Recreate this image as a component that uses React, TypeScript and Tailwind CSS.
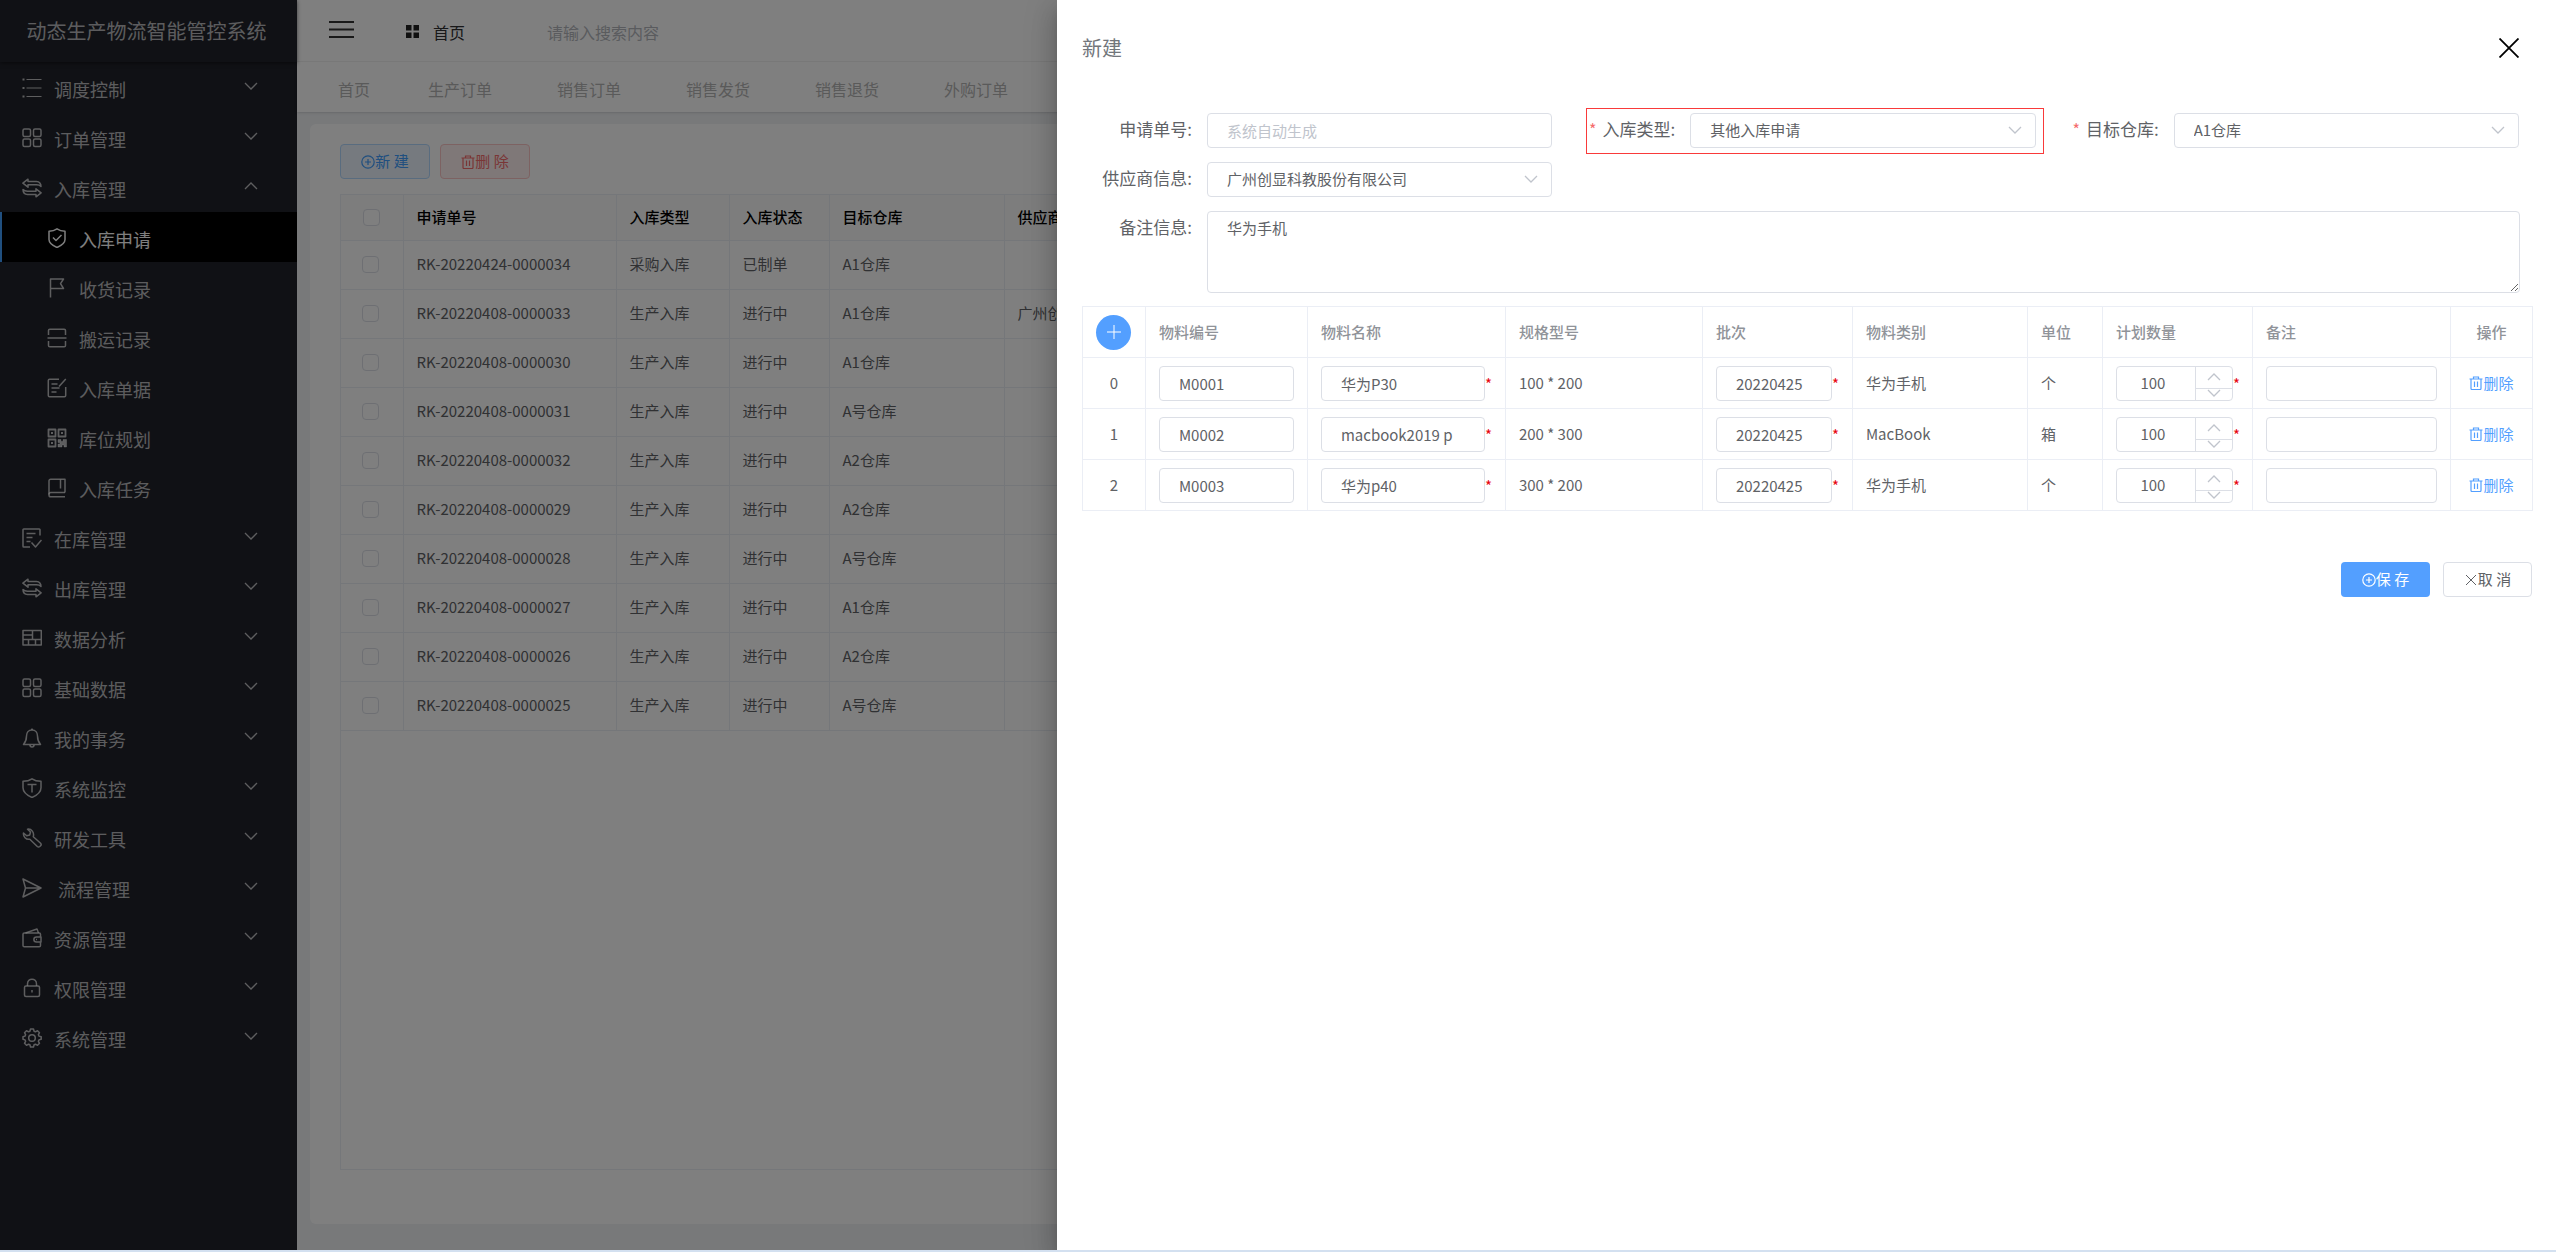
// Inbound request page with the "new request" drawer open on top of it.

import { useState } from "react";
import type { ReactNode } from "react";

type IconName =
  | "list"
  | "grid"
  | "swap"
  | "shield"
  | "flag"
  | "scan"
  | "edit"
  | "qrcode"
  | "book"
  | "todo"
  | "table"
  | "bell"
  | "monitor"
  | "wrench"
  | "send"
  | "wallet"
  | "lock"
  | "gear";

const ICONS: Record<IconName, ReactNode> = {
  list: (
    <>
      <path d="M4.500 1.500h15M4.500 10h15M4.500 18.500h15" strokeWidth="1.200" />
      <path d="M0.500 1.500h2M0.500 10h2M0.500 18.500h2" strokeWidth="2" />
    </>
  ),
  grid: (
    <>
      <rect x="1" y="1" width="7.500" height="7.500" rx="1.500" />
      <rect x="11.500" y="1" width="7.500" height="7.500" rx="1.500" />
      <rect x="1" y="11" width="7.500" height="7.500" rx="1.500" />
      <rect x="11.500" y="11" width="7.500" height="7.500" rx="1.500" />
    </>
  ),
  swap: (
    <>
      <path d="M6 1.200.9 5.200 6 9.200V6.800h8.500c2 0 3.500.5 4.500 1.700 0-3-1.500-4.900-4.500-4.900H6z" />
      <path d="M14 18.800l5.100-4-5.100-4v2.400H5.500c-2 0-3.500-.5-4.500-1.700 0 3 1.500 4.900 4.500 4.900H14z" />
    </>
  ),
  shield: (
    <>
      <path d="M10 .8c2.500 1.700 5 2.300 8 2.400v8.300c0 3.500-3.500 6-8 8-4.500-2-8-4.500-8-8V3.200C5 3.100 7.500 2.500 10 .8z" />
      <path d="m6 9.500 3 3 5.500-5.500" />
    </>
  ),
  flag: <path d="M3.500 19.500V1h13l-3 4.700 3 4.800h-13" />,
  scan: (
    <>
      <path d="M1.500 7V2.500c0-.8.5-1.300 1.300-1.300h14.400c.8 0 1.300.5 1.300 1.300V7" />
      <path d="M1.500 13v4.500c0 .8.5 1.300 1.300 1.300h14.400c.8 0 1.300-.5 1.300-1.300V13M.5 10h19" />
    </>
  ),
  edit: (
    <>
      <path d="M12 1.200H2.500c-.8 0-1.200.5-1.200 1.200v15.200c0 .8.500 1.200 1.200 1.200h15c.7 0 1.200-.5 1.200-1.200V9" />
      <path d="M18.800 1 12 8.500M4.500 6h6M4.500 10h8M4.500 14h5" />
    </>
  ),
  qrcode: (
    <>
      <path d="M1.500 1.500h7v7h-7zM11.500 1.500h7v7h-7zM1.500 11.500h7v7h-7z" strokeWidth="1.800" />
      <path d="M4 5h2M14 5h2M4 15h2" strokeWidth="2" />
      <path d="M11 11.500h3v2h2v-2h3.500v7.500h-2.500v-2h-2v2H11v-3h2v-1.500h-2z" fill="currentColor" strokeWidth=".5" />
    </>
  ),
  book: (
    <>
      <path d="M18 14.500V1.200H3.700c-1 0-1.700.7-1.700 1.700v14c0 1 .7 1.900 1.700 1.900H18" />
      <path d="M2 16.500c0-1.200.8-2 1.800-2H18M13.500 1.500v9" />
    </>
  ),
  todo: (
    <>
      <path d="M18 7.500V1.800c0-.4-.3-.8-.8-.8H1.800c-.5 0-.8.4-.8.800v16.400c0 .5.300.8.800.8H8" />
      <path d="M4.500 5.500h9M4.500 9.500h6M4.500 13.500h4M9.500 14.500l4 4.500 6-7" />
    </>
  ),
  table: <path d="M1 2.500h18.300v14.500H1zM10.500 2.500V11M1 7h9.500M1 11.500h18.300M6.500 11.500V17M13.500 11.500V17" />,
  bell: (
    <>
      <path d="M10 2c-3.500 0-5.500 2.700-5.500 6 0 4-.8 6-3 8.500h17c-2.200-2.500-3-4.500-3-8.500 0-3.300-2-6-5.500-6z" />
      <path d="M10 .5V2M8 17c0 1.300.8 2 2 2s2-.7 2-2" />
    </>
  ),
  monitor: (
    <>
      <path d="M10 .8c2.500 1.700 5.500 2.400 9 2.500v6.500c0 4.500-4 7.500-9 9.700-5-2.200-9-5.200-9-9.700V3.300C4.500 3.200 7.500 2.500 10 .8z" />
      <path d="M5.500 6.500h9M10 6.500v8" />
    </>
  ),
  wrench: (
    <path d="M5.500 1.200 8.500 4l-.8 3-3 .800L1.500 5C1 8.500 4 12 7.800 11.200l7.500 7.300c.8.700 1.800.6 2.500 0l.8-.8c.7-.7.7-1.700 0-2.500l-7.300-6.500C12.500 4.500 9.500.5 5.500 1.200z" />
  ),
  send: <path d="M1 1l18 9L1 19l2.500-9zM3.500 10H19" />,
  wallet: (
    <>
      <path d="M18.500 8.500V6.300c0-.8-.5-1.300-1.300-1.300H2.300C1.500 5 1 5.500 1 6.300v11.200c0 .8.500 1.300 1.300 1.300h14.900c.8 0 1.300-.5 1.300-1.300v-3" />
      <path d="M19 9h-4.500c-3.500 0-3.500 5 0 5H19zM3.500 5 15 1l1.500 4M14 11.500h1" />
    </>
  ),
  lock: (
    <>
      <rect x="2.500" y="8" width="15" height="10.500" rx="1.500" />
      <path d="M5.500 8V6c0-6.500 9-6.500 9 0v2M10 12v2.500" />
    </>
  ),
  gear: (
    <>
      <path d="M8.500 1h3l.6 2.200 1.400.6 2-1.100 2 2-1.100 2 .6 1.400 2.200.6v2.600l-2.200.6-.6 1.400 1.100 2-2 2-2-1.100-1.400.6-.6 2.200h-3l-.6-2.200-1.400-.6-2 1.100-2-2 1.100-2-.6-1.400L1 11.300V8.700l2-.6.6-1.400-1.100-2 2-2 2 1.100 1.400-.6z" />
      <circle cx="10" cy="10" r="3.300" />
    </>
  ),
};

function MenuIcon({ name }: { name: IconName }) {
  return (
    <svg
      viewBox="0 0 20 20"
      className="w-5 h-5 shrink-0"
      fill="none"
      stroke="currentColor"
      strokeWidth="1.500"
      strokeLinejoin="round"
      aria-hidden="true"
    >
      {ICONS[name]}
    </svg>
  );
}

function Chevron({ up = false, className = "" }: { up?: boolean; className?: string }) {
  return (
    <svg viewBox="0 0 14 8" className={`w-[14px] h-2 ${className}`} fill="none" stroke="currentColor" strokeWidth="1.300" aria-hidden="true">
      <path d={up ? "M1 7l6-6 6 6" : "M1 1l6 6 6-6"} />
    </svg>
  );
}

function PlusCircle() {
  return (
    <svg viewBox="0 0 14 14" className="w-[14px] h-[14px]" fill="none" stroke="currentColor" strokeWidth="1.200" aria-hidden="true">
      <circle cx="7" cy="7" r="6.200" />
      <path d="M4 7h6M7 4v6" />
    </svg>
  );
}

function Trash() {
  return (
    <svg viewBox="0 0 14 14" className="w-[14px] h-[14px]" fill="none" stroke="currentColor" strokeWidth="1.200" aria-hidden="true">
      <path d="M.5 3h13M4.500 3V1h5v2M2 3v9.500c0 .6.400 1 1 1h8c.6 0 1-.4 1-1V3M5.500 5.500V11M8.500 5.500V11" />
    </svg>
  );
}

interface MenuEntry {
  label: string;
  icon: IconName;
  children?: { label: string; icon: IconName }[];
}

const MENU: MenuEntry[] = [
  { label: "调度控制", icon: "list" },
  { label: "订单管理", icon: "grid" },
  {
    label: "入库管理",
    icon: "swap",
    children: [
      { label: "入库申请", icon: "shield" },
      { label: "收货记录", icon: "flag" },
      { label: "搬运记录", icon: "scan" },
      { label: "入库单据", icon: "edit" },
      { label: "库位规划", icon: "qrcode" },
      { label: "入库任务", icon: "book" },
    ],
  },
  { label: "在库管理", icon: "todo" },
  { label: "出库管理", icon: "swap" },
  { label: "数据分析", icon: "table" },
  { label: "基础数据", icon: "grid" },
  { label: "我的事务", icon: "bell" },
  { label: "系统监控", icon: "monitor" },
  { label: "研发工具", icon: "wrench" },
  { label: " 流程管理", icon: "send" },
  { label: "资源管理", icon: "wallet" },
  { label: "权限管理", icon: "lock" },
  { label: "系统管理", icon: "gear" },
];

const TABS = ["生产订单", "销售订单", "销售发货", "销售退货", "外购订单"];

const REQUESTS = [
  { no: "RK-20220424-0000034", type: "采购入库", status: "已制单", store: "A1仓库", supplier: "" },
  { no: "RK-20220408-0000033", type: "生产入库", status: "进行中", store: "A1仓库", supplier: "广州创显科教股份有限公司" },
  { no: "RK-20220408-0000030", type: "生产入库", status: "进行中", store: "A1仓库", supplier: "" },
  { no: "RK-20220408-0000031", type: "生产入库", status: "进行中", store: "A号仓库", supplier: "" },
  { no: "RK-20220408-0000032", type: "生产入库", status: "进行中", store: "A2仓库", supplier: "" },
  { no: "RK-20220408-0000029", type: "生产入库", status: "进行中", store: "A2仓库", supplier: "" },
  { no: "RK-20220408-0000028", type: "生产入库", status: "进行中", store: "A号仓库", supplier: "" },
  { no: "RK-20220408-0000027", type: "生产入库", status: "进行中", store: "A1仓库", supplier: "" },
  { no: "RK-20220408-0000026", type: "生产入库", status: "进行中", store: "A2仓库", supplier: "" },
  { no: "RK-20220408-0000025", type: "生产入库", status: "进行中", store: "A号仓库", supplier: "" },
];

const MATERIALS = [
  { code: "M0001", name: "华为P30", spec: "100 * 200", batch: "20220425", category: "华为手机", unit: "个", qty: 100 },
  { code: "M0002", name: "macbook2019 p", spec: "200 * 300", batch: "20220425", category: "MacBook", unit: "箱", qty: 100 },
  { code: "M0003", name: "华为p40", spec: "300 * 200", batch: "20220425", category: "华为手机", unit: "个", qty: 100 },
];

function Sidebar() {
  return (
    <aside className="w-[297px] shrink-0 bg-[#20222a] text-white/70 text-lg">
      <div className="relative z-10 h-[62px] pr-1 flex items-center justify-center text-xl whitespace-nowrap bg-[#20222a] shadow-[0_1px_4px_rgba(0,0,0,0.5)]">
        动态生产物流智能管控系统
      </div>
      <nav>
        {MENU.map((item) => (
          <div key={item.label}>
            <button type="button" className="w-full h-[50px] pt-[2px] pl-[22px] pr-[39px] flex items-center gap-3">
              <MenuIcon name={item.icon} />
              <span className="flex-1 pt-[2px] text-left whitespace-pre">{item.label}</span>
              <Chevron up={Boolean(item.children)} className="mb-1" />
            </button>
            {item.children?.map((child, index) => (
              <a
                key={child.label}
                href="#"
                className={
                  index === 0
                    ? "h-[50px] pt-[2px] pl-[45px] flex items-center gap-3 bg-black text-white border-l-2 border-[#409eff]"
                    : "h-[50px] pt-[2px] pl-[47px] flex items-center gap-3"
                }
              >
                <MenuIcon name={child.icon} />
                <span className="pt-[2px]">{child.label}</span>
              </a>
            ))}
          </div>
        ))}
      </nav>
    </aside>
  );
}

function TopBar() {
  return (
    <header className="bg-white shadow-sm">
      <div className="h-[62px] pt-[2px] pl-8 flex items-center border-b border-[#f0f0f0]">
        <button type="button" aria-label="菜单" className="mr-[52px] pb-1">
          <svg viewBox="0 0 25 20" className="w-[25px] h-5" stroke="#333" strokeWidth="2" aria-hidden="true">
            <path d="M0 2h25M0 9.500h25M0 17h25" />
          </svg>
        </button>
        <a href="#" className="w-[141px] flex items-center gap-[14px] text-base text-[#303133]">
          <svg viewBox="0 0 13 13" className="w-[13px] h-[13px]" fill="#222" aria-hidden="true">
            <path d="M0 0h5.500v5.500H0zM7.500 0H13v5.500H7.500zM0 7.500h5.500V13H0zM7.500 7.500H13V13H7.500z" />
          </svg>
          首页
        </a>
        <input
          type="text"
          aria-label="搜索"
          placeholder="请输入搜索内容"
          className="w-60 h-9 text-base outline-none placeholder:text-[#b4b7bd]"
        />
      </div>
      <nav className="h-[50px] pl-[41px] pt-1 flex items-center text-base text-[#b4b4b4] whitespace-nowrap">
        <a href="#" className="w-[90px] shrink-0">首页</a>
        {TABS.map((tab) => (
          <a key={tab} href="#" className="w-[129px] shrink-0">{tab}</a>
        ))}
      </nav>
    </header>
  );
}

function RequestTable() {
  return (
    <div className="flex-1 border border-[#ebeef5]">
      <table className="w-full table-fixed border-collapse text-left text-[15px] text-[#606266] whitespace-nowrap">
        <colgroup>
          <col className="w-[62px]" />
          <col className="w-[213px]" />
          <col className="w-[113px]" />
          <col className="w-[100px]" />
          <col className="w-[175px]" />
          <col />
        </colgroup>
        <thead className="bg-[#fafafa] text-black">
          <tr className="h-[45px] border-b border-[#ebeef5]">
            <th className="border-r border-[#ebeef5] text-center">
              <input type="checkbox" aria-label="全选" className="block mx-auto w-[17px] h-[17px] appearance-none rounded-sm border border-[#dcdfe6] bg-white" />
            </th>
            {["申请单号", "入库类型", "入库状态", "目标仓库", "供应商信息"].map((title) => (
              <th key={title} className="px-[13px] font-medium border-r border-[#ebeef5]">{title}</th>
            ))}
          </tr>
        </thead>
        <tbody>
          {REQUESTS.map((row) => (
            <tr key={row.no} className="h-[49px] border-b border-[#ebeef5]">
              <td className="pr-[2px] border-r border-[#ebeef5]">
                <input type="checkbox" aria-label={row.no} className="block mx-auto w-[17px] h-[17px] appearance-none rounded-sm border border-[#dcdfe6]" />
              </td>
              <td className="px-[13px] border-r border-[#ebeef5]">{row.no}</td>
              <td className="px-[13px] border-r border-[#ebeef5]">{row.type}</td>
              <td className="px-[13px] border-r border-[#ebeef5]">{row.status}</td>
              <td className="px-[13px] border-r border-[#ebeef5]">{row.store}</td>
              <td className="px-[13px]">{row.supplier}</td>
            </tr>
          ))}
        </tbody>
      </table>
    </div>
  );
}

function Label({ htmlFor, required = false, children }: { htmlFor: string; required?: boolean; children: ReactNode }) {
  return (
    <label htmlFor={htmlFor} className="w-[125px] h-8 pr-[15px] shrink-0 flex items-center justify-end gap-[6px] text-[17px] whitespace-nowrap">
      {required && <span className="text-base text-[#f56c6c]">*</span>}
      {children}
    </label>
  );
}

function SelectBox({ id, value }: { id: string; value: string }) {
  return (
    <div className="relative flex-1 mr-[13px]">
      <select id={id} className="w-full h-[35px] pl-[19px] appearance-none rounded border border-[#dcdfe6] bg-white outline-none">
        <option>{value}</option>
      </select>
      <Chevron className="absolute right-[14px] top-[13px] text-[#c0c4cc] pointer-events-none" />
    </div>
  );
}

function Star() {
  return <span className="w-[7px] pt-[2px] text-center text-red-600">*</span>;
}

function MaterialTable() {
  const cell = "px-[13px] border border-[#ebeef5]";
  const field = "w-full h-[35px] pl-[19px] block rounded border border-[#dcdfe6] outline-none";

  return (
    <table className="w-full mt-[13px] table-fixed border-collapse text-left whitespace-nowrap">
      <colgroup>
        <col className="w-[63px]" />
        <col className="w-[162px]" />
        <col className="w-[198px]" />
        <col className="w-[197px]" />
        <col className="w-[150px]" />
        <col className="w-[175px]" />
        <col className="w-[75px]" />
        <col className="w-[150px]" />
        <col className="w-[198px]" />
        <col className="w-[82px]" />
      </colgroup>
      <thead className="text-[#909399]">
        <tr className="h-[51px]">
          <th className="border border-[#ebeef5]">
            <button type="button" aria-label="添加物料" className="w-[35px] h-[35px] mx-auto flex items-center justify-center rounded-full bg-[#539fff] text-white">
              <svg viewBox="0 0 14 14" className="w-[14px] h-[14px]" stroke="currentColor" aria-hidden="true">
                <path d="M0 7h14M7 0v14" />
              </svg>
            </button>
          </th>
          {["物料编号", "物料名称", "规格型号", "批次", "物料类别", "单位", "计划数量", "备注"].map((title) => (
            <th key={title} className={`${cell} font-medium`}>{title}</th>
          ))}
          <th className="border border-[#ebeef5] font-medium text-center">操作</th>
        </tr>
      </thead>
      <tbody>
        {MATERIALS.map((row, index) => (
          <tr key={row.code} className="h-[51px]">
            <td className="border border-[#ebeef5] text-center">{index}</td>
            <td className={cell}>
              <input aria-label="物料编号" defaultValue={row.code} className={field} />
            </td>
            <td className={cell}>
              <div className="flex items-center">
                <input aria-label="物料名称" defaultValue={row.name} className={`${field} max-w-[165px]`} />
                <Star />
              </div>
            </td>
            <td className={cell}>{row.spec}</td>
            <td className={cell}>
              <div className="flex items-center">
                <input aria-label="批次" defaultValue={row.batch} className={`${field} max-w-[117px]`} />
                <Star />
              </div>
            </td>
            <td className={cell}>{row.category}</td>
            <td className={cell}>{row.unit}</td>
            <td className={cell}>
              <div className="flex items-center">
                <div className="w-[117px] h-[35px] flex rounded border border-[#dcdfe6]">
                  <input aria-label="计划数量" defaultValue={row.qty} className="flex-1 min-w-0 pr-[6px] text-center outline-none" />
                  <div className="w-[37px] flex flex-col border-l border-[#dcdfe6] text-[#c0c4cc]">
                    <button type="button" aria-label="增加" className="h-[22px] flex items-center justify-center border-b border-[#dcdfe6]">
                      <Chevron up />
                    </button>
                    <button type="button" aria-label="减少" className="h-2 flex items-start justify-center">
                      <Chevron />
                    </button>
                  </div>
                </div>
                <Star />
              </div>
            </td>
            <td className={cell}>
              <input aria-label="备注" className={field} />
            </td>
            <td className="border border-[#ebeef5]">
              <button type="button" className="mx-auto flex items-center text-[#539fff]">
                <Trash />
                删除
              </button>
            </td>
          </tr>
        ))}
      </tbody>
    </table>
  );
}

function RequestDrawer() {
  const [remark, setRemark] = useState("华为手机");

  return (
    <section
      role="dialog"
      aria-label="新建"
      className="w-[58.65%] h-full pl-[25px] pr-6 bg-white text-[15px] text-[#606266] shadow-[0_8px_10px_-5px_rgba(0,0,0,0.2),0_16px_24px_2px_rgba(0,0,0,0.14),0_6px_30px_5px_rgba(0,0,0,0.12)]"
    >
      <div className="h-[113px] pt-[30px] pr-[13px] flex items-start justify-between">
        <h2 className="h-9 flex items-center text-xl text-[#72767b]">新建</h2>
        <button type="button" aria-label="关闭" className="h-9 flex items-center">
          <svg viewBox="0 0 20 20" className="w-5 h-5" stroke="#000" strokeWidth="1.800" aria-hidden="true">
            <path d="M.5.5l19 19M19.500.5l-19 19" />
          </svg>
        </button>
      </div>

      <form>
        <div className="grid grid-cols-3 gap-y-[14px]">
          <div className="flex">
            <Label htmlFor="request-no">申请单号:</Label>
            <input
              id="request-no"
              placeholder="系统自动生成"
              className="flex-1 min-w-0 h-[35px] mr-[13px] pl-[19px] rounded border border-[#dcdfe6] outline-none placeholder:text-[#c0c4cc]"
            />
          </div>
          <div className="relative flex">
            <Label htmlFor="request-type" required>入库类型:</Label>
            <SelectBox id="request-type" value="其他入库申请" />
            <div className="absolute left-[21px] right-[5px] -top-[5px] -bottom-[6px] border border-[#f93a3a] pointer-events-none" />
          </div>
          <div className="flex">
            <Label htmlFor="target-store" required>目标仓库:</Label>
            <SelectBox id="target-store" value="A1仓库" />
          </div>
          <div className="flex">
            <Label htmlFor="supplier">供应商信息:</Label>
            <SelectBox id="supplier" value="广州创显科教股份有限公司" />
          </div>
          <div className="col-span-3 flex">
            <Label htmlFor="remark">备注信息:</Label>
            <textarea
              id="remark"
              value={remark}
              onChange={(e) => setRemark(e.target.value)}
              className="flex-1 h-[82px] mr-3 pl-[19px] pt-[5px] rounded border border-[#dcdfe6] outline-none resize"
            />
          </div>
        </div>

        <MaterialTable />

        <div className="mt-[51px] flex justify-end gap-[13px]">
          <button type="button" className="w-[89px] h-[35px] flex items-center justify-center rounded bg-[#539fff] text-white">
            <PlusCircle />
            保 存
          </button>
          <button type="button" className="w-[89px] h-[35px] flex items-center justify-center rounded border border-[#dcdfe6]">
            <svg viewBox="0 0 14 14" className="w-[14px] h-[14px]" stroke="currentColor" aria-hidden="true">
              <path d="M2 2l10 10M12 2l-10 10" />
            </svg>
            取 消
          </button>
        </div>
      </form>
    </section>
  );
}

export default function App() {
  return (
    <div className="h-screen flex flex-col overflow-hidden font-['Noto_Sans_CJK_SC',sans-serif]">
      <div className="relative flex-1 min-h-0 flex">
        <Sidebar />
        <main className="flex-1 min-w-0 flex flex-col bg-[#f0f2f5]">
          <TopBar />
          <div className="flex-1 mt-3 mx-[13px] mb-[26px] pt-5 px-[30px] pb-[54px] flex flex-col rounded-md bg-white">
            <div className="mb-[15px] flex gap-[10px] text-[15px]">
              <button type="button" className="w-[90px] h-[35px] flex items-center justify-center rounded border border-[#b3d8ff] bg-[#ecf5ff] text-[#409eff]">
                <PlusCircle />
                新 建
              </button>
              <button type="button" className="w-[90px] h-[35px] flex items-center justify-center rounded border border-[#fbc4c4] bg-[#fef0f0] text-[#f56c6c]">
                <Trash />
                删 除
              </button>
            </div>
            <RequestTable />
          </div>
        </main>

        {/* dimmed page with the drawer on its right */}
        <div className="absolute inset-0 z-20 flex justify-end overflow-hidden bg-black/50">
          <RequestDrawer />
        </div>
      </div>
      <div className="h-[2px] shrink-0 bg-[#d3e0f0]" />
    </div>
  );
}
